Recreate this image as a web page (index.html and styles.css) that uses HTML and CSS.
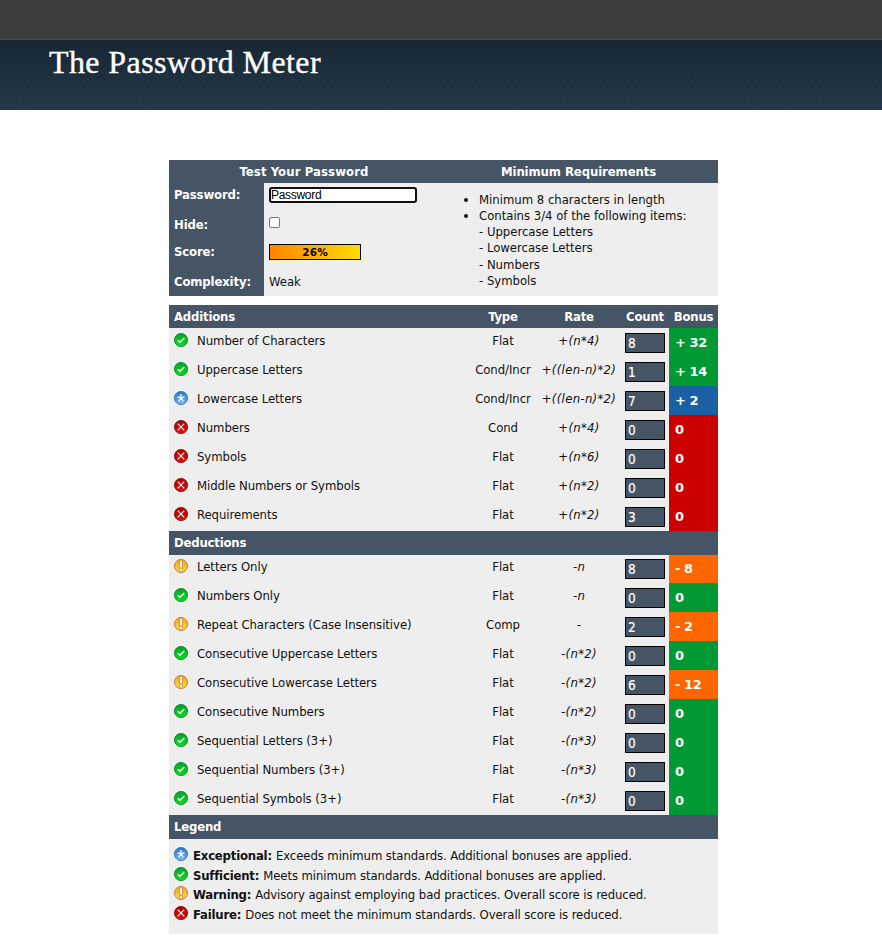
FILE: index.html
```html
<!DOCTYPE html>
<html lang="en">
<head>
<meta charset="utf-8">
<title>The Password Meter</title>
<link rel="stylesheet" href="styles.css">
</head>
<body>
<svg class="defs" width="0" height="0" aria-hidden="true">
  <defs>
    <linearGradient id="gg" x1="0" y1="0" x2="0" y2="1"><stop offset="0" stop-color="#05a02c"/><stop offset="1" stop-color="#0be01c"/></linearGradient>
    <linearGradient id="gb" x1="0" y1="0" x2="0" y2="1"><stop offset="0" stop-color="#2874cf"/><stop offset="1" stop-color="#79b8f5"/></linearGradient>
    <linearGradient id="gr" x1="0" y1="0" x2="0" y2="1"><stop offset="0" stop-color="#b00000"/><stop offset="1" stop-color="#df1010"/></linearGradient>
    <linearGradient id="gy" x1="0" y1="0" x2="0" y2="1"><stop offset="0" stop-color="#f7a51c"/><stop offset="1" stop-color="#ffdc43"/></linearGradient>
  </defs>
  <symbol id="pass" viewBox="0 0 14 14"><circle cx="7" cy="7" r="6.6" fill="url(#gg)" stroke="#087d25" stroke-width=".8"/><path d="M3.8 7.2 6 9.3 10.3 5" fill="none" stroke="#fff" stroke-width="1.3"/></symbol>
  <symbol id="exceed" viewBox="0 0 14 14"><circle cx="7" cy="7" r="6.6" fill="url(#gb)" stroke="#2b68b5" stroke-width=".8"/><path d="M7 3V7M3.6 5.8 7 7 10.4 5.8M4.8 10.4 7 7 9.2 10.4" fill="none" stroke="#fff" stroke-width="1.4"/></symbol>
  <symbol id="fail" viewBox="0 0 14 14"><circle cx="7" cy="7" r="6.6" fill="url(#gr)" stroke="#870000" stroke-width=".8"/><path d="M3.7 3.7 10.3 10.3M10.3 3.7 3.7 10.3" fill="none" stroke="#fff" stroke-width="1.1"/></symbol>
  <symbol id="warn" viewBox="0 0 14 14"><circle cx="7" cy="7" r="6.5" fill="url(#gy)" stroke="#c47a43" stroke-width="1"/><path d="M5.3 2H8.7V9H5.3ZM5.3 9.4H8.7V12.2H5.3Z" fill="#cf8430"/><path d="M6 2H8V8.6H6ZM6 10H8V12H6Z" fill="#fff"/></symbol>
</svg>
<div class="topbar"></div>
<header class="banner"><h1>The Password Meter</h1></header>
<main class="meter">
  <section class="test">
    <h2 class="test-title">Test Your Password</h2>
    <h2 class="test-title">Minimum Requirements</h2>
    <div class="labels"><b>Password:</b><b>Hide:</b><b>Score:</b><b>Complexity:</b></div>
    <div class="values">
      <div class="field">Password</div>
      <div class="check"></div>
      <div class="score">26%</div>
      <div class="complexity">Weak</div>
    </div>
    <ul class="reqs">
      <li>Minimum 8 characters in length</li>
      <li>Contains 3/4 of the following items:<br>- Uppercase Letters<br>- Lowercase Letters<br>- Numbers<br>- Symbols</li>
    </ul>
  </section>

  <section class="rules">
    <div class="row head"><span>Additions</span><span>Type</span><span>Rate</span><span>Count</span><span>Bonus</span></div>
    <div class="row"><span class="name"><svg><use href="#pass"/></svg>Number of Characters</span><span>Flat</span><i>+(n*4)</i><span class="count">8</span><b class="bonus green">+ 32</b></div>
    <div class="row"><span class="name"><svg><use href="#pass"/></svg>Uppercase Letters</span><span>Cond/Incr</span><i>+((len-n)*2)</i><span class="count">1</span><b class="bonus green">+ 14</b></div>
    <div class="row"><span class="name"><svg><use href="#exceed"/></svg>Lowercase Letters</span><span>Cond/Incr</span><i>+((len-n)*2)</i><span class="count">7</span><b class="bonus blue">+ 2</b></div>
    <div class="row"><span class="name"><svg><use href="#fail"/></svg>Numbers</span><span>Cond</span><i>+(n*4)</i><span class="count">0</span><b class="bonus red">0</b></div>
    <div class="row"><span class="name"><svg><use href="#fail"/></svg>Symbols</span><span>Flat</span><i>+(n*6)</i><span class="count">0</span><b class="bonus red">0</b></div>
    <div class="row"><span class="name"><svg><use href="#fail"/></svg>Middle Numbers or Symbols</span><span>Flat</span><i>+(n*2)</i><span class="count">0</span><b class="bonus red">0</b></div>
    <div class="row"><span class="name"><svg><use href="#fail"/></svg>Requirements</span><span>Flat</span><i>+(n*2)</i><span class="count">3</span><b class="bonus red">0</b></div>
    <div class="row head sub"><span>Deductions</span></div>
    <div class="row"><span class="name"><svg><use href="#warn"/></svg>Letters Only</span><span>Flat</span><i>-n</i><span class="count">8</span><b class="bonus orange">- 8</b></div>
    <div class="row"><span class="name"><svg><use href="#pass"/></svg>Numbers Only</span><span>Flat</span><i>-n</i><span class="count">0</span><b class="bonus green">0</b></div>
    <div class="row"><span class="name"><svg><use href="#warn"/></svg>Repeat Characters (Case Insensitive)</span><span>Comp</span><i>-</i><span class="count">2</span><b class="bonus orange">- 2</b></div>
    <div class="row"><span class="name"><svg><use href="#pass"/></svg>Consecutive Uppercase Letters</span><span>Flat</span><i>-(n*2)</i><span class="count">0</span><b class="bonus green">0</b></div>
    <div class="row"><span class="name"><svg><use href="#warn"/></svg>Consecutive Lowercase Letters</span><span>Flat</span><i>-(n*2)</i><span class="count">6</span><b class="bonus orange">- 12</b></div>
    <div class="row"><span class="name"><svg><use href="#pass"/></svg>Consecutive Numbers</span><span>Flat</span><i>-(n*2)</i><span class="count">0</span><b class="bonus green">0</b></div>
    <div class="row"><span class="name"><svg><use href="#pass"/></svg>Sequential Letters (3+)</span><span>Flat</span><i>-(n*3)</i><span class="count">0</span><b class="bonus green">0</b></div>
    <div class="row"><span class="name"><svg><use href="#pass"/></svg>Sequential Numbers (3+)</span><span>Flat</span><i>-(n*3)</i><span class="count">0</span><b class="bonus green">0</b></div>
    <div class="row"><span class="name"><svg><use href="#pass"/></svg>Sequential Symbols (3+)</span><span>Flat</span><i>-(n*3)</i><span class="count">0</span><b class="bonus green">0</b></div>
    <div class="row head legend-title"><span>Legend</span></div>
    <div class="legend">
      <div><svg><use href="#exceed"/></svg><b>Exceptional:</b><span>Exceeds minimum standards. Additional bonuses are applied.</span></div>
      <div><svg><use href="#pass"/></svg><b>Sufficient:</b><span>Meets minimum standards. Additional bonuses are applied.</span></div>
      <div><svg><use href="#warn"/></svg><b>Warning:</b><span>Advisory against employing bad practices. Overall score is reduced.</span></div>
      <div><svg><use href="#fail"/></svg><b>Failure:</b><span>Does not meet the minimum standards. Overall score is reduced.</span></div>
    </div>
  </section>
</main>
</body>
</html>
```
FILE: styles.css
```css
* { box-sizing: border-box; }
body { margin: 0; height: 939px; overflow: hidden; background: #fff; color: #111; font: 13px/16px Tahoma, "DejaVu Sans Condensed", sans-serif; letter-spacing: -.06px; }
.defs { display: block; height: 0; }
svg { width: 14px; height: 14px; flex: none; }
.topbar { height: 40px; background: #3c3c3c; border-bottom: 1px solid #4b4b4b; }
.banner { height: 70px; padding-left: 49px; background: repeating-linear-gradient(45deg, rgba(0,0,0,.04) 0 2px, transparent 2px 5px), repeating-linear-gradient(-45deg, rgba(0,0,0,.04) 0 2px, transparent 2px 5px), linear-gradient(#182733, #243b4e); }
h1 { margin: 0; padding-top: 4px; color: #fff; font: 32px/37px Georgia, "Liberation Serif", serif; letter-spacing: .4px; -webkit-text-stroke: .35px #fff; }
.meter { width: 549px; margin: 50px 0 0 169px; }
.test { display: grid; grid-template: 23px 113px / 95px 175px 279px; background: #eee; }
.test-title { margin: 0; background: #455565; color: #fff; font-size: 13px; line-height: 23px; letter-spacing: -.1px; text-align: center; }
.test-title:first-child { grid-column: span 2; letter-spacing: .1px; }
.labels { display: grid; grid-template-rows: 30px 27px 30px 26px; padding: 4px 0 0 5px; background: #455565; color: #fff; letter-spacing: -.15px; }
.values { padding: 4px 0 0 5px; }
.field { width: 148px; height: 16px; border: 2px solid #111; border-radius: 3px; background: #fff; color: #000; font: 12px/12px "Liberation Sans", sans-serif; letter-spacing: -.3px; }
.check { width: 11px; height: 11px; margin-top: 14px; border: 1px solid #767676; border-radius: 2px; background: #fff; }
.score { width: 92px; height: 16px; margin-top: 16px; border: 1px solid #000; background: linear-gradient(90deg, #ff8400, #ffdc00); font: bold 10.5px/15px Verdana, "DejaVu Sans", sans-serif; letter-spacing: .2px; text-align: center; color: #000; }
.complexity { margin-top: 14px; }
.reqs { margin: 0; padding: 8.5px 0 0 40px; line-height: 16.25px; letter-spacing: -.02px; }
.rules { margin-top: 9px; background: #eee; }
.row { display: grid; grid-template-columns: 300px 68px 84px 48px 49px; height: 29px; text-align: center; }
.row > * { padding-top: 5px; white-space: nowrap; }
.row > i { letter-spacing: .3px; }
.row.head { height: 23px; background: #455565; color: #fff; font-weight: bold; letter-spacing: -.2px; }
.head > * { padding-top: 4px; }
.head > span:first-child { padding-left: 5px; text-align: left; }
.sub { position: relative; box-shadow: 0 1px #455565; }
.row > .name { display: flex; gap: 9px; padding-left: 5px; text-align: left; }
.row > .count { width: 40px; height: 20px; margin: 5px 0 0 4px; padding: 1px 0 0 2px; border: 1px solid #000; background: #455565; color: #fff; font-size: 13.5px; -webkit-text-stroke: .2px #fff; text-align: left; }
.row > .bonus { padding: 7px 0 0 6px; color: #fff; font-family: Verdana, "DejaVu Sans", sans-serif; letter-spacing: -.4px; text-align: left; }
.green { background: #093; }
.blue { background: #1b5fa5; }
.red { background: #c00; }
.orange { background: #f60; }
.row.legend-title { height: 24px; }
.legend { height: 95px; padding: 7px 5px 0; letter-spacing: -.09px; }
.legend div { display: flex; height: 19.6px; line-height: 19px; white-space: nowrap; }
.legend svg { margin-top: 1px; }
.legend b { margin: 0 4px 0 5px; letter-spacing: -.2px; }
```
